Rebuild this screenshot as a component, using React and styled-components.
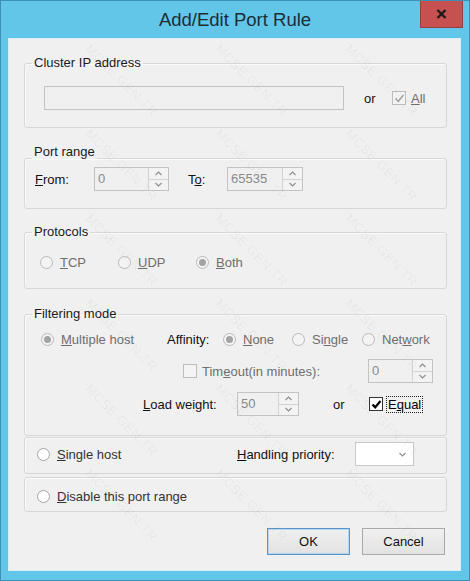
import React from 'react';
import styled, { createGlobalStyle } from 'styled-components';

const GlobalStyle = createGlobalStyle`
  html, body {
    margin: 0;
    padding: 0;
  }
  body {
    font-family: "Liberation Sans", Arial, sans-serif;
    font-size: 13px;
    color: #000;
  }
`;

// watermark grid, only whole copies that fit inside the window
const marks = [];
for (let r = 0; r < 6; r++) {
  for (let c = 0; c < 3; c++) {
    marks.push({ x: 92 + c * 130, y: 40 + r * 85 });
  }
}

const Chevron = ({ down }) => (
  <svg width="7" height="5" viewBox="0 0 7 5">
    <polyline
      points={down ? '0.5,1 3.5,4 6.5,1' : '0.5,4 3.5,1 6.5,4'}
      fill="none"
      stroke="#8c8c8c"
      strokeWidth="1.1"
    />
  </svg>
);

const Radio = ({ checked, disabled, children, width }) => (
  <RadioItem $w={width} $disabled={disabled}>
    <RadioCircle $disabled={disabled}>{checked ? <RadioDot /> : null}</RadioCircle>
    <span>{children}</span>
  </RadioItem>
);

const Check = ({ checked, disabled, focused, children }) => (
  <CheckItem $disabled={disabled}>
    <CheckBox $disabled={disabled}>
      {checked ? (
        <svg width="11" height="11" viewBox="0 0 11 11">
          <polyline
            points="1.5,5.5 4.2,8.3 9.5,2"
            fill="none"
            stroke={disabled ? '#a2a2a2' : '#000'}
            strokeWidth={disabled ? 1.5 : 2.2}
          />
        </svg>
      ) : null}
    </CheckBox>
    <CheckLabel $focused={focused}>{children}</CheckLabel>
  </CheckItem>
);

const Spinner = ({ value, width }) => (
  <SpinBox $w={width}>
    <SpinValue>{value}</SpinValue>
    <SpinButtons>
      <SpinButton>
        <Chevron />
      </SpinButton>
      <SpinButton>
        <Chevron down />
      </SpinButton>
    </SpinButtons>
  </SpinBox>
);

const App = () => (
  <>
    <GlobalStyle />
    <Window>
      <TitleBar>
        <Title>Add/Edit Port Rule</Title>
        <CloseButton>
          <svg width="11" height="10" viewBox="0 0 11 10">
            <path d="M1.5 1 L9.5 9 M9.5 1 L1.5 9" stroke="#1b1b1b" strokeWidth="2.4" />
          </svg>
        </CloseButton>
      </TitleBar>
      <Client>
        <Group>
          <Legend>Cluster IP address</Legend>
          <Row $pl={19} $pt={16} $pb={17} $h={24}>
            <TextBox />
            <Text $w={28} $ml={20}>or</Text>
            <Check checked disabled>
              <Key>A</Key>ll
            </Check>
          </Row>
        </Group>

        <Group $mt={23}>
          <Legend $raise={6}>Port range</Legend>
          <Row $pl={10} $pt={2} $pb={17} $h={24}>
            <Text $w={59}>
              <Key>F</Key>rom:
            </Text>
            <Spinner value="0" width={75} />
            <Text $w={39} $ml={19}>
              T<Key>o</Key>:
            </Text>
            <Spinner value="65535" width={76} />
          </Row>
        </Group>

        <Group $mt={16}>
          <Legend>Protocols</Legend>
          <Row $pl={15} $pt={13} $pb={16} $h={20}>
            <Radio disabled width={78}>
              <Key>T</Key>CP
            </Radio>
            <Radio disabled width={78}>
              <Key>U</Key>DP
            </Radio>
            <Radio disabled checked>
              <Key>B</Key>oth
            </Radio>
          </Row>
        </Group>

        <Group $mt={18}>
          <Legend>Filtering mode</Legend>
          <Row $pl={16} $pt={8} $h={20}>
            <Radio disabled checked width={126}>
              <Key>M</Key>ultiple host
            </Radio>
            <Text $w={56}>Affinity:</Text>
            <Radio disabled checked width={69}>
              <Key>N</Key>one
            </Radio>
            <Radio disabled width={70}>
              Si<Key>n</Key>gle
            </Radio>
            <Radio disabled>
              Net<Key>w</Key>ork
            </Radio>
          </Row>
          <Row $pl={158} $pr={13} $pt={10} $h={24}>
            <Check disabled>
              Tim<Key>e</Key>out(in minutes):
            </Check>
            <Push />
            <Spinner value="0" width={65} />
          </Row>
          <Row $pl={118} $pt={9} $pb={19} $h={24}>
            <Text $w={94}>
              <Key>L</Key>oad weight:
            </Text>
            <Spinner value="50" width={62} />
            <Text $w={36} $ml={34}>or</Text>
            <Check checked focused>
              E<Key>q</Key>ual
            </Check>
          </Row>
        </Group>

        <Group $mt={1}>
          <Row $pl={12} $pt={4} $pb={7} $h={24}>
            <Radio width={200}>
              <Key>S</Key>ingle host
            </Radio>
            <Text $w={118}>
              <Key>H</Key>andling priority:
            </Text>
            <Dropdown>
              <Chevron down />
            </Dropdown>
          </Row>
        </Group>

        <Group $mt={3}>
          <Row $pl={12} $pt={8} $pb={5} $h={20}>
            <Radio>
              <Key>D</Key>isable this port range
            </Radio>
          </Row>
        </Group>

        <ButtonRow>
          <Button $default>OK</Button>
          <Button>Cancel</Button>
        </ButtonRow>
      </Client>
      <Watermark>
        {marks.map((m, i) => (
          <Mark key={i} style={{ left: m.x, top: m.y }}>
            MCSE.GEN.TR
          </Mark>
        ))}
      </Watermark>
    </Window>
  </>
);

export default App;

const Window = styled.div`
  position: relative;
  width: 470px;
  height: 581px;
  box-sizing: border-box;
  background: #62c6e8;
  border: 1px solid #3d90b3;
  display: flex;
  flex-direction: column;
  overflow: hidden;
`;

const TitleBar = styled.div`
  height: 38px;
  display: grid;
  grid-template-columns: 1fr auto 1fr;
  align-items: center;
`;

const Title = styled.div`
  grid-column: 2;
  font-size: 18.5px;
  color: #1d2d38;
  padding-bottom: 1px;
`;

const CloseButton = styled.div`
  grid-column: 3;
  justify-self: end;
  align-self: start;
  width: 43px;
  height: 28px;
  margin-top: -1px;
  margin-right: 6px;
  box-sizing: border-box;
  background: #c75050;
  border: 1px solid #93413f;
  border-top: none;
  display: flex;
  align-items: center;
  justify-content: center;
`;

const Client = styled.div`
  flex: 1;
  margin: 0 9px 10px 8px;
  background: #f0f0f0;
  box-shadow: 0 0 0 1px #d9eef6;
  padding: 17px 13px 0 15px;
  display: flex;
  flex-direction: column;
`;

const Group = styled.fieldset`
  margin: ${({ $mt }) => $mt || 0}px 0 0 0;
  padding: 0;
  min-width: 0;
  border: 1px solid #d7d7d7;
  border-radius: 3px;
  box-shadow: inset 1px 1px 0 #fbfbfb;
`;

const Legend = styled.legend`
  position: relative;
  top: ${({ $raise }) => -($raise || 0)}px;
  margin-left: 7px;
  padding: 0 2px;
  line-height: 14px;
  height: 14px;
  color: #1a1a1a;
`;

const Row = styled.div`
  display: flex;
  align-items: center;
  height: ${({ $h }) => $h}px;
  padding: ${({ $pt }) => $pt || 0}px ${({ $pr }) => $pr || 0}px
    ${({ $pb }) => $pb || 0}px ${({ $pl }) => $pl || 0}px;
`;

const Push = styled.div`
  flex: 1;
`;

const Text = styled.span`
  flex: none;
  width: ${({ $w }) => ($w ? `${$w}px` : 'auto')};
  margin-left: ${({ $ml }) => $ml || 0}px;
  color: #111;
  white-space: nowrap;
`;

const Key = styled.span`
  text-decoration: underline;
  text-underline-offset: 1px;
`;

const TextBox = styled.div`
  width: 300px;
  height: 24px;
  box-sizing: border-box;
  border: 1px solid #c3c3c3;
  background: #f0f0f0;
`;

const RadioItem = styled.label`
  flex: none;
  width: ${({ $w }) => ($w ? `${$w}px` : 'auto')};
  display: flex;
  align-items: center;
  gap: 7px;
  white-space: nowrap;
  color: ${({ $disabled }) => ($disabled ? '#6e6e6e' : '#333')};
`;

const RadioCircle = styled.span`
  width: 13px;
  height: 13px;
  box-sizing: border-box;
  border-radius: 50%;
  border: 1px solid ${({ $disabled }) => ($disabled ? '#b9b9b9' : '#a4a4a4')};
  background: ${({ $disabled }) => ($disabled ? '#f4f4f4' : '#fff')};
  display: flex;
  align-items: center;
  justify-content: center;
`;

const RadioDot = styled.span`
  width: 7px;
  height: 7px;
  border-radius: 50%;
  background: #a3a3a3;
`;

const CheckItem = styled.label`
  flex: none;
  display: flex;
  align-items: center;
  gap: 6px;
  white-space: nowrap;
  color: ${({ $disabled }) => ($disabled ? '#6e6e6e' : '#000')};
`;

const CheckBox = styled.span`
  width: 14px;
  height: 14px;
  box-sizing: border-box;
  border: 1px solid ${({ $disabled }) => ($disabled ? '#bdbdbd' : '#333')};
  background: ${({ $disabled }) => ($disabled ? '#f4f4f4' : '#fff')};
  display: flex;
  align-items: center;
  justify-content: center;
`;

const CheckLabel = styled.span`
  padding: 0 1px;
  margin-left: -2px;
  outline: ${({ $focused }) => ($focused ? '1px dotted #222' : 'none')};
`;

const SpinBox = styled.div`
  flex: none;
  width: ${({ $w }) => $w}px;
  height: 24px;
  box-sizing: border-box;
  border: 1px solid #c3c3c3;
  background: #f0f0f0;
  display: flex;
`;

const SpinValue = styled.div`
  flex: 1;
  padding-left: 3px;
  line-height: 22px;
  color: #8a8a8a;
`;

const SpinButtons = styled.div`
  width: 19px;
  display: flex;
  flex-direction: column;
  border-left: 1px solid #d2d2d2;
`;

const SpinButton = styled.div`
  flex: 1;
  display: flex;
  align-items: center;
  justify-content: center;
  background: #f3f3f3;
  & + & {
    border-top: 1px solid #d2d2d2;
  }
`;

const Dropdown = styled.div`
  width: 59px;
  height: 24px;
  box-sizing: border-box;
  border: 1px solid #c8c8c8;
  background: #fff;
  display: flex;
  align-items: center;
  justify-content: flex-end;
  padding-right: 7px;
`;

const ButtonRow = styled.div`
  display: flex;
  justify-content: flex-end;
  gap: 12px;
  margin-top: 16px;
  padding-right: 2px;
`;

const Button = styled.div`
  width: 83px;
  height: 27px;
  box-sizing: border-box;
  border: 1px solid ${({ $default }) => ($default ? '#5b96c8' : '#a9a9a9')};
  box-shadow: ${({ $default }) => ($default ? 'inset 0 0 0 1px #b9d5ee' : 'none')};
  background: linear-gradient(#f0f0f0, #e2e2e2);
  display: flex;
  align-items: center;
  justify-content: center;
  color: #111;
`;

const Watermark = styled.div`
  position: absolute;
  inset: 0;
  pointer-events: none;
  overflow: hidden;
`;

const Mark = styled.div`
  position: absolute;
  font-size: 13px;
  letter-spacing: 0.5px;
  color: rgba(0, 0, 0, 0.06);
  transform: rotate(45deg);
  transform-origin: 0 0;
  white-space: nowrap;
`;
